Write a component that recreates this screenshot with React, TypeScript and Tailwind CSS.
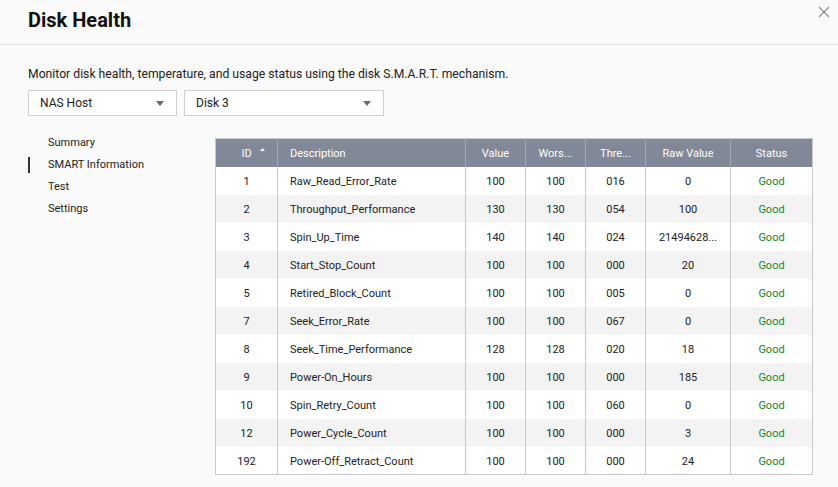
import React from "react"

const ROWS = [
  ["1", "Raw_Read_Error_Rate", "100", "100", "016", "0"],
  ["2", "Throughput_Performance", "130", "130", "054", "100"],
  ["3", "Spin_Up_Time", "140", "140", "024", "21494628..."],
  ["4", "Start_Stop_Count", "100", "100", "000", "20"],
  ["5", "Retired_Block_Count", "100", "100", "005", "0"],
  ["7", "Seek_Error_Rate", "100", "100", "067", "0"],
  ["8", "Seek_Time_Performance", "128", "128", "020", "18"],
  ["9", "Power-On_Hours", "100", "100", "000", "185"],
  ["10", "Spin_Retry_Count", "100", "100", "060", "0"],
  ["12", "Power_Cycle_Count", "100", "100", "000", "3"],
  ["192", "Power-Off_Retract_Count", "100", "100", "000", "24"],
]

const NAV = ["Summary", "SMART Information", "Test", "Settings"]

function Select({ label, width }: { label: string; width: string }) {
  return (
    <div
      className={`flex h-[26px] items-center justify-between border border-[#cfcfcf] bg-white pl-[11px] pr-[12px] text-[12px] text-[#222] ${width}`}
    >
      <span>{label}</span>
      <svg width="8" height="5" viewBox="0 0 8 5" aria-hidden="true">
        <path d="M0 0h8L4 5z" fill="#6b6b6b" />
      </svg>
    </div>
  )
}

export default function App() {
  return (
    <div className="h-[487px] w-[838px] overflow-hidden bg-[#fafafa] font-['Roboto',sans-serif] text-[#222]">
      {/* Header */}
      <div className="flex h-[45px] items-start justify-between border-b border-[#dedede] pl-[28px] pr-[6px]">
        <h1 className="pt-[6px] text-[20px] font-bold leading-[28px] text-[#111]">Disk Health</h1>
        <button className="mt-[4px] p-[2px]" aria-label="Close">
          <svg width="12" height="12" viewBox="0 0 12 12" aria-hidden="true">
            <path d="M1 1l10 10M11 1L1 11" stroke="#8a8a8a" strokeWidth="1.1" />
          </svg>
        </button>
      </div>

      <div className="px-[28px]">
        <p className="pt-[21px] text-[12.2px] leading-[16px] text-[#222]">
          Monitor disk health, temperature, and usage status using the disk S.M.A.R.T. mechanism.
        </p>

        <div className="mt-[8px] flex gap-[7px]">
          <Select label="NAS Host" width="w-[149px]" />
          <Select label="Disk 3" width="w-[200px]" />
        </div>

        <div className="mt-[22px] flex">
          {/* Side navigation */}
          <nav className="w-[187px] shrink-0">
            <ul className="-mt-[6px] flex flex-col">
              {NAV.map((item) => {
                const active = item === "SMART Information"
                return (
                  <li key={item} className="flex h-[22px] items-center text-[11px]">
                    <span className={`h-[16px] w-[2px] ${active ? "bg-[#333]" : "bg-transparent"}`} />
                    <span className="pl-[18px] text-[#222]">{item}</span>
                  </li>
                )
              })}
            </ul>
          </nav>

          {/* SMART table */}
          <table className="w-[597px] table-fixed border-collapse border border-[#c8c8c8] text-[11px]">
            <colgroup>
              <col className="w-[62px]" />
              <col className="w-[188px]" />
              <col className="w-[60px]" />
              <col className="w-[60px]" />
              <col className="w-[60px]" />
              <col className="w-[85px]" />
              <col className="w-[82px]" />
            </colgroup>
            <thead>
              <tr className="h-[28px] bg-[#828897] text-white [&>th]:pt-[2px] [&>th]:font-normal">
                <th className="border-r border-[#a3a8b3]">
                  <span className="relative">
                    ID
                    <svg
                      className="absolute -right-[13px] top-[1px]"
                      width="5"
                      height="3"
                      viewBox="0 0 5 3"
                      aria-hidden="true"
                    >
                      <path d="M0 3h5L2.5 0z" fill="#fff" />
                    </svg>
                  </span>
                </th>
                <th className="border-r border-[#a3a8b3] pl-[12px] text-left">Description</th>
                <th className="border-r border-[#a3a8b3]">Value</th>
                <th className="border-r border-[#a3a8b3]">Wors...</th>
                <th className="border-r border-[#a3a8b3]">Thre...</th>
                <th className="border-r border-[#a3a8b3]">Raw Value</th>
                <th>Status</th>
              </tr>
            </thead>
            <tbody>
              {ROWS.map((r, i) => (
                <tr
                  key={r[0]}
                  className={`h-[28px] [&>td]:pt-[4px] ${i % 2 === 1 ? "bg-[#f3f3f3]" : "bg-white"}`}
                >
                  <td className="border-r border-[#c8c8c8] text-center">{r[0]}</td>
                  <td className="border-r border-[#c8c8c8] pl-[12px]">{r[1]}</td>
                  <td className="border-r border-[#c8c8c8] text-center">{r[2]}</td>
                  <td className="border-r border-[#c8c8c8] text-center">{r[3]}</td>
                  <td className="border-r border-[#c8c8c8] text-center">{r[4]}</td>
                  <td className="border-r border-[#c8c8c8] text-center">{r[5]}</td>
                  <td className="text-center text-[#15862b]">Good</td>
                </tr>
              ))}
            </tbody>
          </table>
        </div>
      </div>
    </div>
  )
}
